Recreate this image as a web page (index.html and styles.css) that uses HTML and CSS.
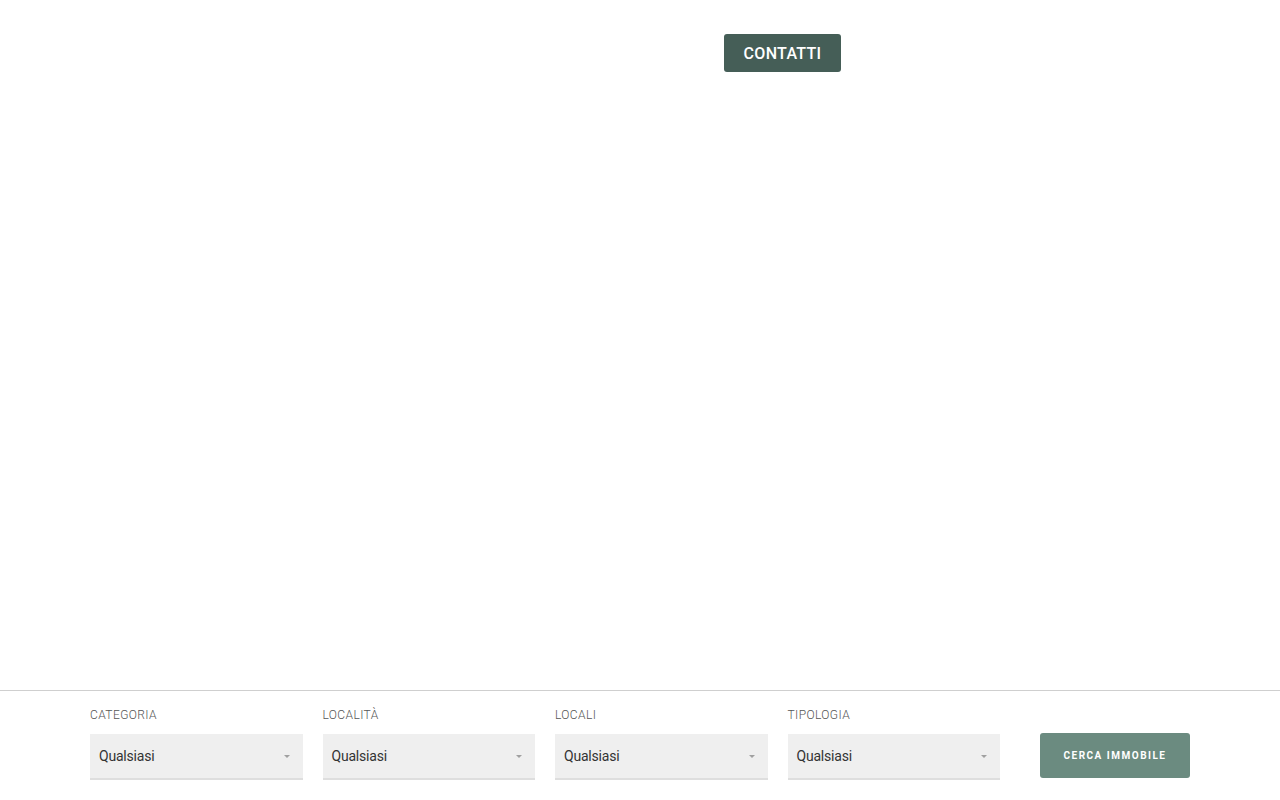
FILE: index.html
```html
<!DOCTYPE html>
<html lang="it">
<head>
<meta charset="utf-8">
<title>Immobili</title>
<link rel="stylesheet" href="styles.css">
</head>
<body>
<div class="page">
  <header class="header">
    <a class="btn-contatti" href="#">CONTATTI</a>
  </header>
  <main class="main"></main>
  <footer class="search-bar">
    <form class="search-form">
      <div class="field">
        <label class="field-label">CATEGORIA</label>
        <div class="select"><span>Qualsiasi</span><i class="caret"></i></div>
      </div>
      <div class="field">
        <label class="field-label">LOCALITÀ</label>
        <div class="select"><span>Qualsiasi</span><i class="caret"></i></div>
      </div>
      <div class="field">
        <label class="field-label">LOCALI</label>
        <div class="select"><span>Qualsiasi</span><i class="caret"></i></div>
      </div>
      <div class="field">
        <label class="field-label">TIPOLOGIA</label>
        <div class="select"><span>Qualsiasi</span><i class="caret"></i></div>
      </div>
      <button class="btn-search" type="button">CERCA IMMOBILE</button>
    </form>
  </footer>
</div>
</body>
</html>
```
FILE: styles.css
```css
* { box-sizing: border-box; }
html, body { margin: 0; padding: 0; background: #fff; }
body { font-family: Roboto, "Liberation Sans", sans-serif; }
.page { height: 800px; display: flex; flex-direction: column; }
.header { padding: 34px 0 0 724px; }
.btn-contatti {
  display: inline-flex; align-items: center; justify-content: center;
  width: 117px; height: 38px;
  background: #455e57; color: #fff; border-radius: 3px;
  font-family: Roboto, sans-serif; font-weight: 500; font-size: 16px;
  letter-spacing: 0.3px; text-decoration: none;
}
.main { flex: 1; }
.search-bar {
  height: 110px; border-top: 1px solid #cfcfcf; background: #fff;
  padding-top: 16px;
}
.search-form {
  width: 1100px; margin: 0 auto;
  display: flex; align-items: flex-end; gap: 20px;
}
.field { flex: 1; display: flex; flex-direction: column; }
.field-label {
  font-family: Roboto, sans-serif; font-weight: 300; font-size: 12px; color: #555;
  letter-spacing: 0.4px; line-height: 16px; margin-bottom: 11px;
}
.select {
  height: 46px; background: #efefef; border-bottom: 2px solid #dedede;
  display: flex; align-items: center; justify-content: space-between;
  padding: 0 13px 0 9px;
  font-family: Roboto, sans-serif; font-weight: 400; font-size: 14px; color: #333;
  letter-spacing: -0.2px;
}
.caret {
  width: 0; height: 0;
  border-left: 3px solid transparent; border-right: 3px solid transparent;
  border-top: 3px solid #a0a0a0;
}
.btn-search {
  flex: 0 0 150px; height: 45px; margin-left: 20px; margin-bottom: 2px;
  background: #6b8b80; color: #fff; border: 0; border-radius: 3px;
  font-family: Roboto, sans-serif; font-weight: 700; font-size: 10px;
  letter-spacing: 1.5px;
}
```
